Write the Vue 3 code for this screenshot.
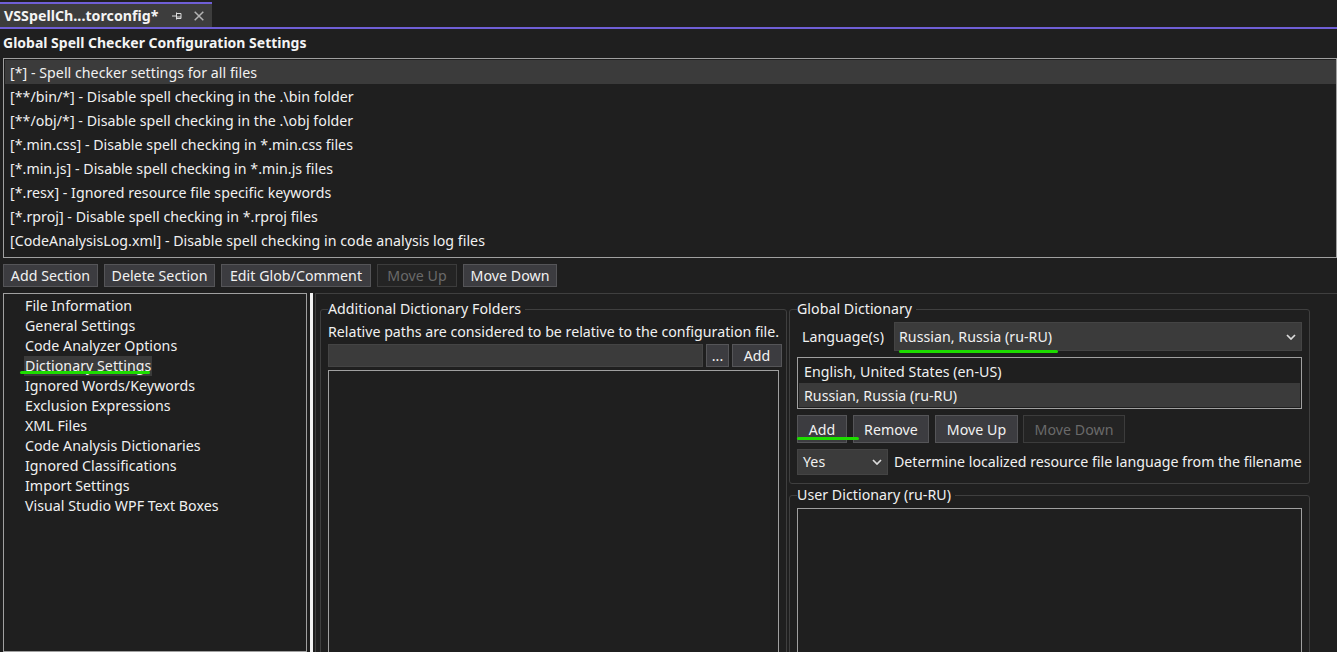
<script setup>
const sections = [
  '[*] - Spell checker settings for all files',
  '[**/bin/*] - Disable spell checking in the .\\bin folder',
  '[**/obj/*] - Disable spell checking in the .\\obj folder',
  '[*.min.css] - Disable spell checking in *.min.css files',
  '[*.min.js] - Disable spell checking in *.min.js files',
  '[*.resx] - Ignored resource file specific keywords',
  '[*.rproj] - Disable spell checking in *.rproj files',
  '[CodeAnalysisLog.xml] - Disable spell checking in code analysis log files',
];

const pages = [
  'File Information',
  'General Settings',
  'Code Analyzer Options',
  'Dictionary Settings',
  'Ignored Words/Keywords',
  'Exclusion Expressions',
  'XML Files',
  'Code Analysis Dictionaries',
  'Ignored Classifications',
  'Import Settings',
  'Visual Studio WPF Text Boxes',
];
</script>

<template>
  <div class="editor">
    <div class="tabstrip">
      <div class="tab">
        <span class="tab-title">VSSpellCh...torconfig*</span>
        <svg class="pin" width="10" height="8" viewBox="0 0 10 8">
          <path d="M0 4h4M4.5 0.5v7M4.5 1.5h4.5v5h-4.5M4.5 5h4.5" fill="none" stroke="#dcdcdc" stroke-width="1" />
        </svg>
        <svg class="close" width="10" height="10" viewBox="0 0 10 10">
          <path d="M0.7 0.7l8.6 8.6M9.3 0.7l-8.6 8.6" fill="none" stroke="#b4b4b4" stroke-width="1.5" />
        </svg>
      </div>
    </div>

    <div class="heading">Global Spell Checker Configuration Settings</div>

    <div class="list sections">
      <div v-for="(s, i) in sections" :key="s" class="row" :class="{ selected: i === 0 }">{{ s }}</div>
    </div>

    <div class="toolbar">
      <button class="btn add-section">Add Section</button>
      <button class="btn delete-section">Delete Section</button>
      <button class="btn edit-glob">Edit Glob/Comment</button>
      <button class="btn move-up" disabled>Move Up</button>
      <button class="btn move-down">Move Down</button>
    </div>

    <div class="body">
      <div class="tree">
        <div v-for="p in pages" :key="p" class="tree-item">
          <span class="tree-label" :class="{ current: p === 'Dictionary Settings' }">{{ p }}</span>
          <i v-if="p === 'Dictionary Settings'" class="mark mark-tree"></i>
        </div>
      </div>

      <div class="splitter"></div>

      <div class="pane">
        <fieldset class="group folders">
          <legend>Additional Dictionary Folders</legend>
          <div class="hint">Relative paths are considered to be relative to the configuration file.</div>
          <div class="folder-input">
            <div class="input"></div>
            <button class="btn browse">...</button>
            <button class="btn folder-add">Add</button>
          </div>
          <div class="list folder-list"></div>
        </fieldset>

        <div class="right-col">
          <fieldset class="group global">
            <legend>Global Dictionary</legend>
            <div class="lang-row">
              <span class="lang-label">Language(s)</span>
              <div class="select lang-select">
                <span>Russian, Russia (ru-RU)</span>
                <svg width="10" height="6" viewBox="0 0 10 6">
                  <path d="M1 1l4 4 4-4" fill="none" stroke="#dcdcdc" stroke-width="1.7" />
                </svg>
                <i class="mark mark-lang"></i>
              </div>
            </div>
            <div class="list lang-list">
              <div class="row">English, United States (en-US)</div>
              <div class="row selected">Russian, Russia (ru-RU)</div>
            </div>
            <div class="lang-buttons">
              <button class="btn lang-add">Add<i class="mark mark-add"></i></button>
              <button class="btn lang-remove">Remove</button>
              <button class="btn lang-up">Move Up</button>
              <button class="btn lang-down" disabled>Move Down</button>
            </div>
            <div class="resource-row">
              <div class="select yes-select">
                <span>Yes</span>
                <svg width="10" height="6" viewBox="0 0 10 6">
                  <path d="M1 1l4 4 4-4" fill="none" stroke="#dcdcdc" stroke-width="1.7" />
                </svg>
              </div>
              <span class="resource-text">Determine localized resource file language from the filename</span>
            </div>
          </fieldset>

          <fieldset class="group user">
            <legend>User Dictionary (ru-RU)</legend>
            <div class="list user-list"></div>
          </fieldset>
        </div>
      </div>
    </div>
  </div>
</template>

<style>
html,
body {
  margin: 0;
  background: #1f1f1f;
  overflow: hidden;
}
</style>

<style scoped>
.editor {
  width: 1337px;
  height: 652px;
  overflow: hidden;
  display: flex;
  flex-direction: column;
  background: #1f1f1f;
  color: #f1f1f1;
  font-family: "Noto Sans", "Open Sans", sans-serif;
  font-size: 14.2px;
  letter-spacing: 0.03px;
  line-height: 20px;
}

.tabstrip {
  height: 25px;
  padding-top: 2px;
  flex: none;
  display: flex;
  box-sizing: content-box;
  border-bottom: 2px solid #6f5fd6;
  background: #1f1f1f;
}

.tab {
  width: 212px;
  box-sizing: border-box;
  display: flex;
  align-items: center;
  border-top: 2px solid #6f5fd6;
  padding-left: 4px;
  background: #3d3d3d;
}

.tab-title {
  width: 168px;
  font-weight: 700;
  color: #f4f4f4;
}

.pin {
  flex: none;
}

.close {
  flex: none;
  margin-left: 12px;
}

.heading {
  flex: none;
  height: 29px;
  padding-left: 3px;
  line-height: 28px;
  font-size: 14px;
  letter-spacing: 0;
  font-weight: 700;
  color: #f4f4f4;
}

.list {
  box-sizing: border-box;
  border: 1px solid #a0a0a0;
  padding: 1px;
}

.sections {
  flex: none;
  height: 200px;
  margin-left: 3px;
  padding-right: 0;
}

.row {
  height: 24px;
  line-height: 25px;
  padding-left: 5px;
  white-space: nowrap;
}

.row.selected {
  background: #3b3b3b;
}

.toolbar {
  flex: none;
  display: flex;
  gap: 6px;
  margin: 6px 0 0 3px;
}

.btn {
  box-sizing: border-box;
  display: block;
  height: 23px;
  padding: 0;
  margin: 0;
  border: 1px solid #555558;
  background: #3c3c40;
  color: #f1f1f1;
  font: inherit;
  letter-spacing: inherit;
  line-height: 20px;
  position: relative;
}

.btn:disabled {
  background: #242424;
  border-color: #3c3c3c;
  color: #6a6a6a;
}

.add-section {
  width: 95px;
}

.delete-section {
  width: 111px;
}

.edit-glob {
  width: 150px;
}

.move-up {
  width: 80px;
}

.move-down {
  width: 94px;
}

.body {
  flex: 1;
  min-height: 0;
  display: flex;
  margin-top: 6px;
}

.tree {
  flex: none;
  box-sizing: border-box;
  width: 304px;
  margin-left: 3px;
  padding: 2px 0 0 20px;
  border: 1px solid #a0a0a0;
}

.tree-item {
  height: 20px;
  line-height: 20px;
  white-space: nowrap;
  position: relative;
}

.tree-label {
  display: inline-block;
  padding: 0 1px;
}

.tree-label.current {
  background: #3b3b3b;
}

.splitter {
  flex: none;
  width: 3px;
  margin-left: 3px;
  background: #f2f2f2;
}

.pane {
  flex: 1;
  min-width: 0;
  margin-left: 2px;
  display: flex;
  gap: 2px;
  padding: 7px 0 0 4px;
  border-top: 1px solid #3f3f3f;
  border-left: 1px solid #3f3f3f;
}

.group {
  box-sizing: border-box;
  margin: 0;
  min-width: 0;
  padding: 0 7px;
  border: 1px solid #3f3f3f;
  border-radius: 3px;
}

.group legend {
  padding: 0 4px 0 0;
  margin-left: 0;
  line-height: 16px;
}

.folders {
  flex: none;
  width: 467px;
  height: 400px;
}

.hint {
  margin-top: 5px;
  height: 20px;
  white-space: nowrap;
  letter-spacing: 0;
}

.folder-input {
  display: flex;
  gap: 3px;
  margin-top: 2px;
  width: 454px;
}

.input {
  width: 375px;
  height: 23px;
  box-sizing: border-box;
  background: #3b3b3b;
  border: 1px solid #444;
}

.browse {
  width: 23px;
}

.folder-add {
  width: 50px;
}

.folder-list {
  margin-top: 3px;
  width: 451px;
  height: 400px;
}

.right-col {
  flex: none;
  width: 521px;
  display: flex;
  flex-direction: column;
  gap: 3px;
}

.global {
  height: 183px;
  flex: none;
}

.lang-row {
  display: flex;
  align-items: center;
  margin-top: 5px;
}

.lang-label {
  width: 97px;
  padding-left: 5px;
  box-sizing: border-box;
}

.select {
  box-sizing: border-box;
  display: flex;
  align-items: center;
  justify-content: space-between;
  background: #3b3b3b;
  border: 1px solid #444;
  position: relative;
}

.lang-select {
  width: 408px;
  height: 29px;
  padding: 0 5px 0 4px;
}

.lang-list {
  width: 505px;
  height: 52px;
  margin-top: 6px;
}

.lang-buttons {
  display: flex;
  gap: 6px;
  margin-top: 6px;
}

.lang-buttons .btn {
  height: 28px;
  padding-top: 1px;
}

.lang-add {
  width: 50px;
}

.lang-remove {
  width: 76px;
}

.lang-up {
  width: 83px;
}

.lang-down {
  width: 102px;
  margin-left: -1px;
}

.resource-row {
  display: flex;
  align-items: center;
  gap: 6px;
  margin-top: 6px;
  white-space: nowrap;
}

.yes-select {
  flex: none;
  width: 91px;
  height: 26px;
  padding: 0 5px;
}

.resource-text {
  letter-spacing: 0;
}

.user {
  flex: none;
  height: 300px;
}

.user-list {
  width: 505px;
  height: 300px;
  margin-top: 5px;
}

.mark {
  position: absolute;
  z-index: 1;
  height: 3px;
  border-radius: 2px;
  background: #1ddc00;
}

.mark-tree {
  left: -4px;
  top: 15px;
  width: 130px;
}

.mark-lang {
  left: 4px;
  top: 27px;
  width: 159px;
}

.mark-add {
  left: -1px;
  top: 21px;
  width: 62px;
}
</style>
